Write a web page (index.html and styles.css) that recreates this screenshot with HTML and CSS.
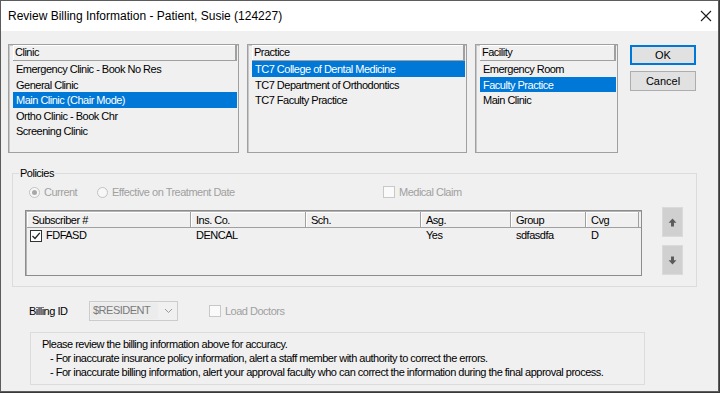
FILE: index.html
```html
<!DOCTYPE html>
<html lang="en">
<head>
    <meta charset="UTF-8">
    <title>Review Billing Information</title>
    <link rel="stylesheet" href="styles.css">
</head>
<body>
    <div class="window">
        <div class="titlebar">
            <span class="title">Review Billing Information - Patient, Susie (124227)</span>
            <svg class="close" width="12" height="12" viewBox="0 0 12 12">
                <path d="M1 1 L11 11 M11 1 L1 11" stroke="#1a1a1a" stroke-width="1.1" fill="none"/>
            </svg>
        </div>

        <div class="client">
            <div class="top-row">
                <div class="listbox clinic">
                    <div class="lb-head">Clinic</div>
                    <div class="lb-item">Emergency Clinic - Book No Res</div>
                    <div class="lb-item">General Clinic</div>
                    <div class="lb-item selected">Main Clinic (Chair Mode)</div>
                    <div class="lb-item">Ortho Clinic - Book Chr</div>
                    <div class="lb-item">Screening Clinic</div>
                </div>
                <div class="listbox practice">
                    <div class="lb-head">Practice</div>
                    <div class="lb-item selected">TC7 College of Dental Medicine</div>
                    <div class="lb-item">TC7 Department of Orthodontics</div>
                    <div class="lb-item">TC7 Faculty Practice</div>
                </div>
                <div class="listbox facility">
                    <div class="lb-head">Facility</div>
                    <div class="lb-item">Emergency Room</div>
                    <div class="lb-item selected">Faculty Practice</div>
                    <div class="lb-item">Main Clinic</div>
                </div>
                <div class="dialog-buttons">
                    <button class="btn default">OK</button>
                    <button class="btn">Cancel</button>
                </div>
            </div>

            <fieldset class="policies">
                <legend>Policies</legend>
                <div class="options-row">
                    <label class="opt opt-current"><span class="radio checked"></span>Current</label>
                    <label class="opt opt-effective"><span class="radio"></span>Effective on Treatment Date</label>
                    <label class="opt"><span class="check disabled"></span>Medical Claim</label>
                </div>
                <div class="grid-row">
                    <table class="grid">
                        <colgroup>
                            <col class="c-sub"><col class="c-ins"><col class="c-sch">
                            <col class="c-asg"><col class="c-grp"><col class="c-cvg"><col>
                        </colgroup>
                        <thead>
                            <tr>
                                <th>Subscriber #</th>
                                <th>Ins. Co.</th>
                                <th>Sch.</th>
                                <th>Asg.</th>
                                <th>Group</th>
                                <th>Cvg</th>
                                <th class="filler"></th>
                            </tr>
                        </thead>
                        <tbody>
                            <tr>
                                <td class="sub-cell">
                                    <span class="check on">
                                        <svg width="10" height="10" viewBox="0 0 10 10"><path d="M1.5 5 L4 7.5 L8.8 1.8" stroke="#222" stroke-width="1.3" fill="none"/></svg>
                                    </span>FDFASD
                                </td>
                                <td>DENCAL</td>
                                <td></td>
                                <td>Yes</td>
                                <td>sdfasdfa</td>
                                <td>D</td>
                                <td></td>
                            </tr>
                        </tbody>
                    </table>
                    <div class="move-buttons">
                        <div class="move-btn">
                            <svg width="9" height="9" viewBox="0 0 8 8"><path d="M4 0.5 L7.5 4.2 L5.3 4.2 L5.3 7.5 L2.7 7.5 L2.7 4.2 L0.5 4.2 Z" fill="#5a5a5a"/></svg>
                        </div>
                        <div class="move-btn">
                            <svg width="9" height="9" viewBox="0 0 8 8"><path d="M4 7.5 L7.5 3.8 L5.3 3.8 L5.3 0.5 L2.7 0.5 L2.7 3.8 L0.5 3.8 Z" fill="#5a5a5a"/></svg>
                        </div>
                    </div>
                </div>
            </fieldset>

            <div class="billing-row">
                <span class="billing-label">Billing ID</span>
                <div class="combo">
                    <span class="combo-text">$RESIDENT</span>
                    <svg class="chevron" width="9" height="6" viewBox="0 0 9 6"><path d="M1 1 L4.5 4.5 L8 1" stroke="#9a9a9a" stroke-width="1" fill="none"/></svg>
                </div>
                <label class="opt load-doctors"><span class="check disabled"></span>Load Doctors</label>
            </div>

            <div class="note">
                <div>Please review the billing information above for accuracy.</div>
                <div class="indent">- For inaccurate insurance policy information, alert a staff member with authority to correct the errors.</div>
                <div class="indent">- For inaccurate billing information, alert your approval faculty who can correct the information during the final approval process.</div>
            </div>
        </div>
    </div>
</body>
</html>
```

FILE: styles.css
```css
body {
    margin: 0;
    background-color: #3a3a3a;
    font-family: "Liberation Sans", Arial, sans-serif;
}
.window {
    width: 719px;
    height: 392px;
    box-sizing: border-box;
    border: 1px solid #5c5c5c;
    background-color: #f0f0f0;
    display: flex;
    flex-direction: column;
}
.titlebar {
    height: 29px;
    background-color: #fff;
    display: flex;
    align-items: center;
    justify-content: space-between;
    padding: 0 6px 1px 7px;
    font-size: 12px;
    color: #000;
}
.client {
    flex: 1;
    font-size: 11px;
    letter-spacing: -0.5px;
    color: #000;
}

/* list boxes */
.top-row {
    display: flex;
    align-items: flex-start;
    margin: 13px 0 0 7px;
}
.listbox {
    height: 109px;
    box-sizing: border-box;
    border: 1px solid #a0a0a0;
    box-shadow: inset 1px 1px 0 #c8c8c8;
    padding: 0 1px 0 4px;
    margin-right: 8px;
}
.clinic { width: 231px; }
.practice { width: 220px; }
.facility { width: 143px; }
.lb-head {
    height: 16px;
    line-height: 15px;
    box-sizing: border-box;
    padding-left: 2px;
    border-right: 2px solid #a0a0a0;
    border-bottom: 1px solid #a0a0a0;
    box-shadow: inset 1px 1px 0 #fff;
}
.lb-item {
    height: 15.5px;
    line-height: 16px;
    padding-left: 3px;
    white-space: nowrap;
}
.lb-item.selected {
    background-color: #0078d7;
    color: #fff;
}
.dialog-buttons {
    display: flex;
    flex-direction: column;
    gap: 6px;
    margin: 1px 0 0 4px;
}
.btn {
    width: 66px;
    height: 20px;
    padding: 0;
    font-family: "Liberation Sans", Arial, sans-serif;
    font-size: 11px;
    color: #000;
    background-color: #e1e1e1;
    border: 1px solid #adadad;
}
.btn.default {
    border: 2px solid #0078d7;
}

/* policies group */
.policies {
    width: 685px;
    box-sizing: border-box;
    margin: 14px 0 0 11px;
    padding: 0 0 10px 0;
    border: 1px solid #dcdcdc;
    min-width: 0;
}
.policies legend {
    margin-left: 6px;
    padding: 0 1px;
    line-height: 13px;
}
.options-row {
    display: flex;
    align-items: center;
    height: 24px;
    padding-left: 16px;
    color: #a0a0a0;
}
.opt {
    display: flex;
    align-items: center;
    gap: 4px;
}
.opt-current { width: 68px; }
.opt-effective { width: 286px; }
.radio {
    width: 11px;
    height: 11px;
    box-sizing: border-box;
    border: 1px solid #c2c2c2;
    border-radius: 50%;
    background-color: #f7f7f7;
    display: flex;
    align-items: center;
    justify-content: center;
}
.radio.checked::after {
    content: "";
    width: 5px;
    height: 5px;
    border-radius: 50%;
    background-color: #a8a8a8;
}
.check {
    width: 12px;
    height: 12px;
    box-sizing: border-box;
    border: 1px solid #333;
    background-color: #fff;
    display: inline-flex;
    align-items: center;
    justify-content: center;
}
.check.disabled {
    border-color: #c8c8c8;
    background-color: #fafafa;
}

.grid-row {
    display: flex;
    align-items: flex-start;
    margin-top: 3px;
}
.grid {
    margin: 3px 0 0 12px;
    width: 617px;
    height: 66px;
    box-sizing: border-box;
    border-collapse: separate;
    border-spacing: 0;
    table-layout: fixed;
    border: 1px solid #8c8c8c;
    box-shadow: inset 1px 1px 0 #b4b4b4;
    padding: 1px 0 0 1px;
}
.c-sub { width: 164px; }
.c-ins { width: 115px; }
.c-sch { width: 115px; }
.c-asg { width: 90px; }
.c-grp { width: 75px; }
.c-cvg { width: 53px; }
.grid th {
    height: 16px;
    box-sizing: border-box;
    padding: 0 0 0 5px;
    text-align: left;
    font-weight: normal;
    border-right: 1px solid #a0a0a0;
    border-bottom: 1px solid #a0a0a0;
    box-shadow: inset 1px 1px 0 #fff;
    line-height: 14px;
    white-space: nowrap;
}
.grid th.filler {
    border-right: none;
    box-shadow: none;
}
.grid td {
    padding: 0 0 0 5px;
    line-height: 14px;
    vertical-align: top;
    white-space: nowrap;
}
.grid td.sub-cell {
    padding-left: 3px;
}
.sub-cell .check {
    vertical-align: -2px;
    margin-right: 4px;
}
.move-buttons {
    display: flex;
    flex-direction: column;
    gap: 8px;
    margin-left: 20px;
}
.move-btn {
    width: 21px;
    height: 30px;
    box-sizing: border-box;
    background-color: #d0d0d0;
    border: 1px solid #dadada;
    display: flex;
    align-items: center;
    justify-content: center;
}

/* billing id */
.billing-row {
    display: flex;
    align-items: center;
    height: 20px;
    margin: 14px 0 0 28px;
}
.billing-label {
    width: 60px;
}
.combo {
    width: 89px;
    height: 20px;
    box-sizing: border-box;
    border: 1px solid #cccccc;
    display: flex;
    align-items: center;
    padding: 1px;
}
.combo-text {
    width: 67px;
    height: 16px;
    line-height: 15px;
    padding-left: 2px;
    box-sizing: border-box;
    background-color: #ececec;
    color: #7a7a7a;
}
.chevron {
    margin-left: 6px;
}
.load-doctors {
    margin-left: 31px;
    color: #a0a0a0;
}

/* note */
.note {
    width: 615px;
    height: 53px;
    box-sizing: border-box;
    margin: 11px 0 0 29px;
    padding: 4px 0 0 11px;
    border: 1px solid #dcdcdc;
    line-height: 14px;
    white-space: nowrap;
}
.note .indent {
    padding-left: 8px;
}
```
